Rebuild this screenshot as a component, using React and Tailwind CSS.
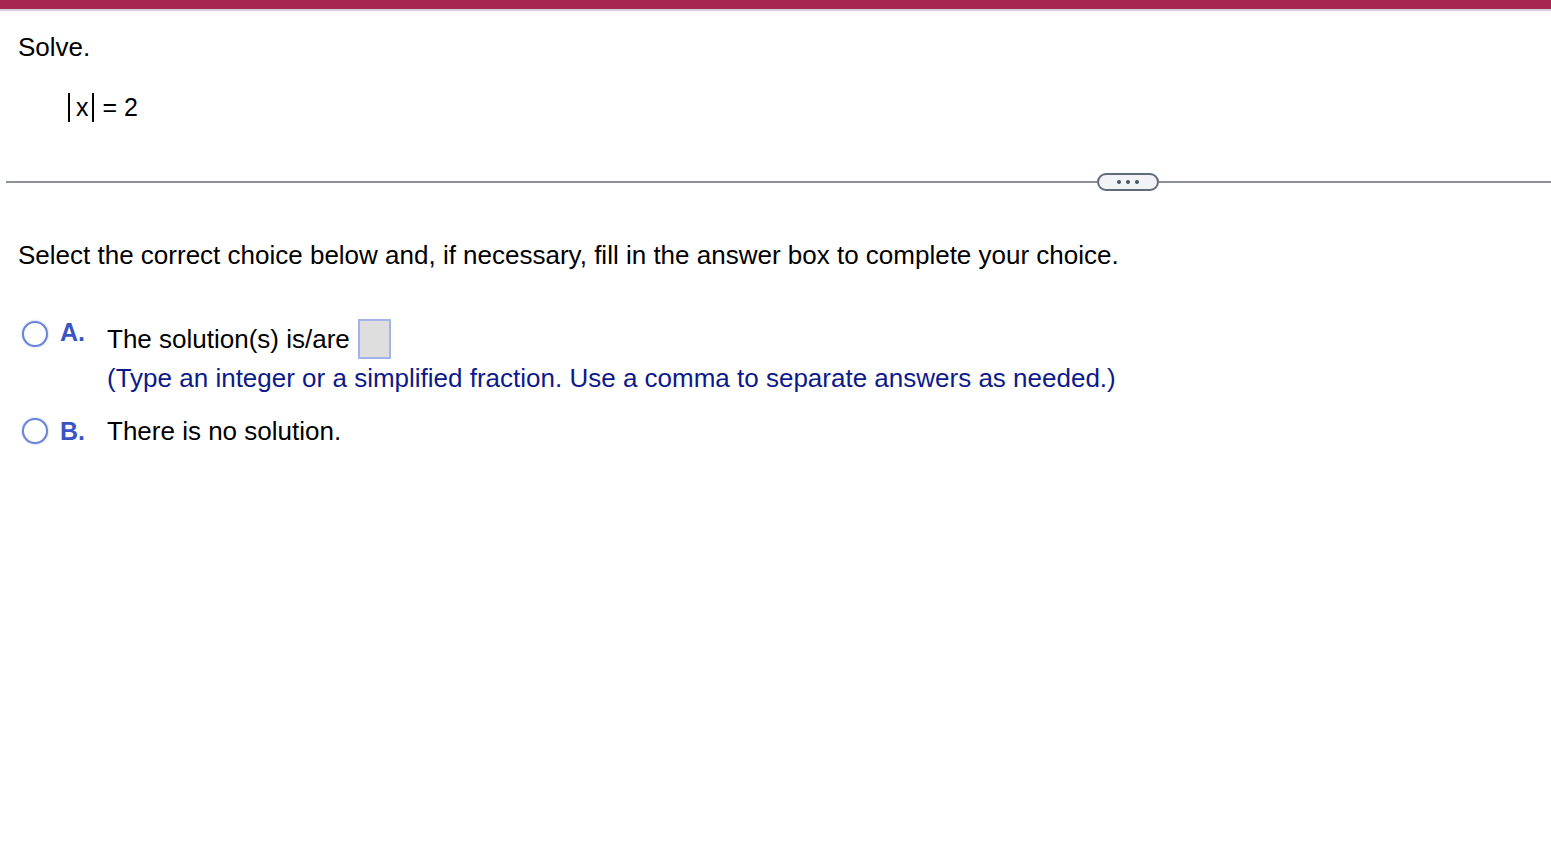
import React from "react";

function Radio() {
  return (
    <div className="w-[26px] h-[26px] rounded-full border-2 border-[#6b84dc] bg-white shadow-[0_0_2px_#9fb0ea] shrink-0" />
  );
}

export default function App() {
  return (
    <div className="w-[1551px] h-[868px] bg-white text-black" style={{ fontFamily: '"Liberation Sans", Arial, sans-serif' }}>
      <div className="h-[9px] bg-[#a4254f]" />
      <div className="h-[2px] bg-[#d3d0de]" />
      <div className="pl-[18px] pt-[21px]">
        <div className="text-[26px] leading-[30px]">Solve.</div>
        <div className="mt-[30px] ml-[50px] flex items-center h-[30px] text-[25px] leading-[30px]">
          <span className="inline-block w-[2px] h-[29px] bg-black mr-[6px]" />
          <span>x</span>
          <span className="inline-block w-[2px] h-[29px] bg-black ml-[3px] mr-[9px]" />
          <span>= 2</span>
        </div>
      </div>
      <div className="mt-[51px] flex items-center pl-[6px]">
        <div className="flex-1 h-[2px] bg-[#8a909a]" />
        <div className="w-[62px] h-[18px] rounded-full border-2 border-[#5f6b7a] bg-[#f1f3f6] flex items-center justify-center gap-[5px]">
          <span className="w-[4px] h-[4px] rounded-full bg-[#4a5564]" />
          <span className="w-[4px] h-[4px] rounded-full bg-[#4a5564]" />
          <span className="w-[4px] h-[4px] rounded-full bg-[#4a5564]" />
        </div>
        <div className="w-[392px] h-[2px] bg-[#8a909a]" />
      </div>
      <div className="pl-[18px] mt-[49px] text-[26px] leading-[30px]">
        Select the correct choice below and, if necessary, fill in the answer box to complete your choice.
      </div>
      <div className="pl-[22px] mt-[45px]">
        <div className="flex items-start">
          <div className="mt-[6px]"><Radio /></div>
          <div className="ml-[12px] w-[46px] text-[25px] font-bold text-[#3b54c4] leading-[30px] mt-[2px]">A.</div>
          <div className="ml-[1px]">
            <div className="flex items-start">
              <span className="text-[26px] leading-[30px] mt-[9px]">The solution(s) is/are</span>
              <span className="ml-[8px] mt-[4px] inline-block w-[33px] h-[40px] bg-[#dedede] border-2 border-[#a3b3e5]" />
            </div>
            <div className="text-[26px] leading-[30px] text-[#0d1a8a] mt-[4px]">
              (Type an integer or a simplified fraction. Use a comma to separate answers as needed.)
            </div>
          </div>
        </div>
        <div className="flex items-center mt-[23px]">
          <Radio />
          <div className="ml-[12px] w-[46px] text-[25px] font-bold text-[#3b54c4] leading-[30px]">B.</div>
          <div className="ml-[1px] text-[26px] leading-[30px]">There is no solution.</div>
        </div>
      </div>
    </div>
  );
}
